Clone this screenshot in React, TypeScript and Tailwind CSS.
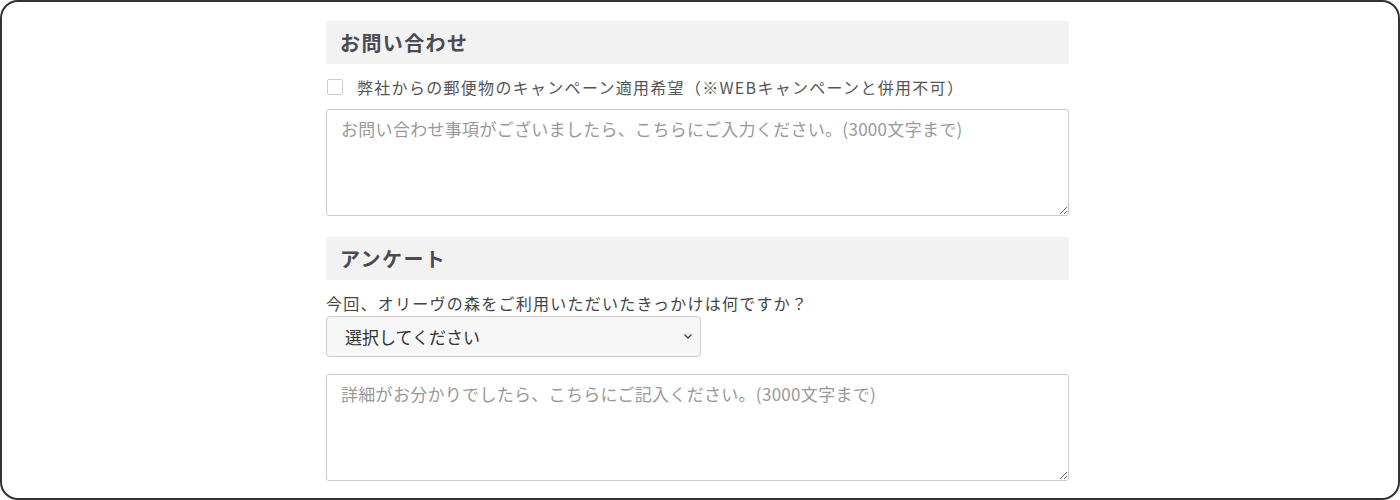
import React from "react";

export default function App() {
  return (
    <div className="w-[1400px] h-[500px] bg-white border-2 border-[#333333] rounded-[18px] overflow-hidden">
      <div className="ml-[324px] w-[743px] pt-[19px] flex flex-col" style={{ fontFamily: '"Noto Sans CJK JP", sans-serif' }}>
        <div className="h-[43px] bg-[#f2f2f2] flex items-center px-[14px]">
          <h2 className="text-[20px] font-bold text-[#4a4a55] tracking-[1.4px] leading-none">お問い合わせ</h2>
        </div>
        <label className="mt-[13px] h-[20px] flex items-center">
          <span className="w-[16px] h-[16px] ml-[1px] border border-[#cccccc] rounded-[2px] bg-white shrink-0" />
          <span className="ml-[14px] text-[16px] tracking-[1.3px] text-[#555555] leading-none">
            弊社からの郵便物のキャンペーン適用希望（※WEBキャンペーンと併用不可）
          </span>
        </label>
        <textarea
          className="mt-[12px] h-[107px] w-full border border-[#cccccc] rounded-[3px] px-[14px] pt-[7px] text-[17px] leading-[24px] tracking-[0.3px] text-[#333] placeholder:text-[#999999] outline-none"
          placeholder="お問い合わせ事項がございましたら、こちらにご入力ください。(3000文字まで)"
        />
        <div className="mt-[21px] h-[43px] bg-[#f2f2f2] flex items-center px-[14px]">
          <h2 className="text-[20px] font-bold text-[#4a4a55] tracking-[1.4px] leading-none">アンケート</h2>
        </div>
        <p className="mt-[11px] text-[16px] leading-[24px] tracking-[1.25px] text-[#444444]">
          今回、オリーヴの森をご利用いただいたきっかけは何ですか？
        </p>
        <div className="relative mt-[1px] w-[375px] h-[41px]">
          <select className="appearance-none w-full h-full bg-[#f7f7f7] border border-[#cccccc] rounded-[4px] pl-[18px] pr-[30px] text-[17px] text-[#333333] outline-none">
            <option>選択してください</option>
          </select>
          <svg className="absolute right-[8px] top-[16px] pointer-events-none" width="10" height="8" viewBox="0 0 10 8">
            <path d="M1.5 2.5 L5 6 L8.5 2.5" fill="none" stroke="#444" strokeWidth="1.3" />
          </svg>
        </div>
        <textarea
          className="mt-[17px] h-[107px] w-full border border-[#cccccc] rounded-[3px] px-[14px] pt-[7px] text-[17px] leading-[24px] tracking-[0.3px] text-[#333] placeholder:text-[#999999] outline-none"
          placeholder="詳細がお分かりでしたら、こちらにご記入ください。(3000文字まで)"
        />
      </div>
    </div>
  );
}
